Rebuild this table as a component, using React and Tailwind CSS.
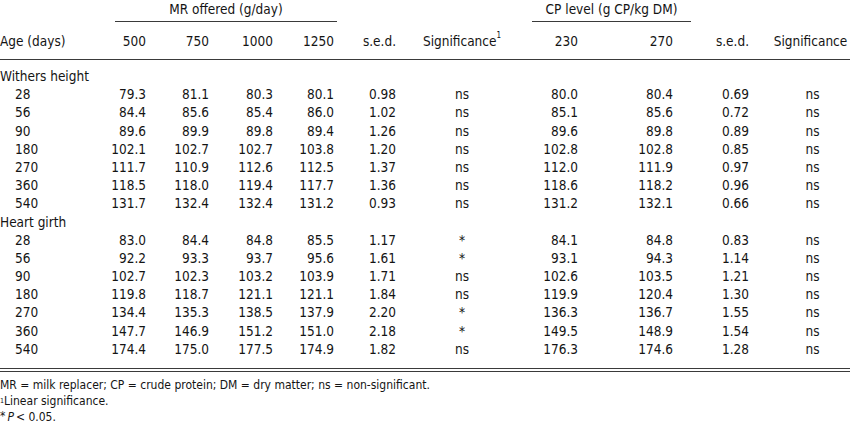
import React from "react";

const COLS = "grid grid-cols-[110px_36px_63px_64px_61px_62px_132px_50px_95px_76px_101px]";

const withers = [
  ["28", "79.3", "81.1", "80.3", "80.1", "0.98", "ns", "80.0", "80.4", "0.69", "ns"],
  ["56", "84.4", "85.6", "85.4", "86.0", "1.02", "ns", "85.1", "85.6", "0.72", "ns"],
  ["90", "89.6", "89.9", "89.8", "89.4", "1.26", "ns", "89.6", "89.8", "0.89", "ns"],
  ["180", "102.1", "102.7", "102.7", "103.8", "1.20", "ns", "102.8", "102.8", "0.85", "ns"],
  ["270", "111.7", "110.9", "112.6", "112.5", "1.37", "ns", "112.0", "111.9", "0.97", "ns"],
  ["360", "118.5", "118.0", "119.4", "117.7", "1.36", "ns", "118.6", "118.2", "0.96", "ns"],
  ["540", "131.7", "132.4", "132.4", "131.2", "0.93", "ns", "131.2", "132.1", "0.66", "ns"],
];

const heart = [
  ["28", "83.0", "84.4", "84.8", "85.5", "1.17", "*", "84.1", "84.8", "0.83", "ns"],
  ["56", "92.2", "93.3", "93.7", "95.6", "1.61", "*", "93.1", "94.3", "1.14", "ns"],
  ["90", "102.7", "102.3", "103.2", "103.9", "1.71", "ns", "102.6", "103.5", "1.21", "ns"],
  ["180", "119.8", "118.7", "121.1", "121.1", "1.84", "ns", "119.9", "120.4", "1.30", "ns"],
  ["270", "134.4", "135.3", "138.5", "137.9", "2.20", "*", "136.3", "136.7", "1.55", "ns"],
  ["360", "147.7", "146.9", "151.2", "151.0", "2.18", "*", "149.5", "148.9", "1.54", "ns"],
  ["540", "174.4", "175.0", "177.5", "174.9", "1.82", "ns", "176.3", "174.6", "1.28", "ns"],
];

function DataRow({ r }) {
  return (
    <div className={`${COLS} h-[18.2px] items-center leading-[18.2px]`}>
      <div className="pl-[15px]">{r[0]}</div>
      <div className="text-right">{r[1]}</div>
      <div className="text-right">{r[2]}</div>
      <div className="text-right">{r[3]}</div>
      <div className="text-right">{r[4]}</div>
      <div className="text-right">{r[5]}</div>
      <div className="text-center">{r[6]}</div>
      <div className="text-right">{r[7]}</div>
      <div className="text-right">{r[8]}</div>
      <div className="text-right">{r[9]}</div>
      <div className="pl-[26px] text-center">{r[10]}</div>
    </div>
  );
}

function SectionTitle({ children }) {
  return <div className="h-[18.2px] leading-[18.2px]">{children}</div>;
}

export default function App() {
  return (
    <div
      className="w-[850px] h-[423px] bg-white text-[#141414] text-[13.5px] overflow-hidden"
      style={{ fontFamily: '"DejaVu Sans Condensed", "Liberation Sans", sans-serif' }}
    >
      {/* group header */}
      <div className={`${COLS} h-[22px]`}>
        <div />
        <div className="col-span-4 ml-[5px] mr-[-3px] border-b border-[#3a3a3a] text-center leading-[19px] h-[22px]">
          MR offered (g/day)
        </div>
        <div />
        <div />
        <div className="col-span-2 ml-[4px] mr-[-18px] border-b border-[#3a3a3a] text-center leading-[19px] h-[22px]">
          CP level (g CP/kg DM)
        </div>
        <div />
        <div />
      </div>
      {/* column header */}
      <div className={`${COLS} h-[38px] items-center border-b border-[#3a3a3a]`}>
        <div className="pt-[1px]">Age (days)</div>
        <div className="text-right pt-[1px]">500</div>
        <div className="text-right pt-[1px]">750</div>
        <div className="text-right pt-[1px]">1000</div>
        <div className="text-right pt-[1px]">1250</div>
        <div className="text-right pt-[1px]">s.e.d.</div>
        <div className="text-center whitespace-nowrap pt-[1px]">
          Significance<span className="text-[8px] align-top relative top-[-1px]">1</span>
        </div>
        <div className="text-right pt-[1px]">230</div>
        <div className="text-right pt-[1px]">270</div>
        <div className="text-right pt-[1px]">s.e.d.</div>
        <div className="pl-[22px] text-center whitespace-nowrap pt-[1px]">Significance</div>
      </div>
      {/* body */}
      <div className="pt-[7px] pb-[10px]">
        <SectionTitle>Withers height</SectionTitle>
        {withers.map((r, i) => (
          <DataRow key={"w" + i} r={r} />
        ))}
        <SectionTitle>Heart girth</SectionTitle>
        {heart.map((r, i) => (
          <DataRow key={"h" + i} r={r} />
        ))}
      </div>
      {/* double rule */}
      <div className="h-px bg-[#3a3a3a]" />
      <div className="h-[2px]" />
      <div className="h-px bg-[#3a3a3a]" />
      {/* footnotes */}
      <div className="pt-[5px] text-[12px] leading-[16px]">
        <div>MR = milk replacer; CP = crude protein; DM = dry matter; ns = non-significant.</div>
        <div>
          <span className="text-[7px] align-top">1</span>Linear significance.
        </div>
        <div>
          <span className="relative top-[-1px]">*</span>
          <span className="italic ml-[2px]">P</span>
          <span className="ml-[2px]">&lt; 0.05.</span>
        </div>
      </div>
    </div>
  );
}
